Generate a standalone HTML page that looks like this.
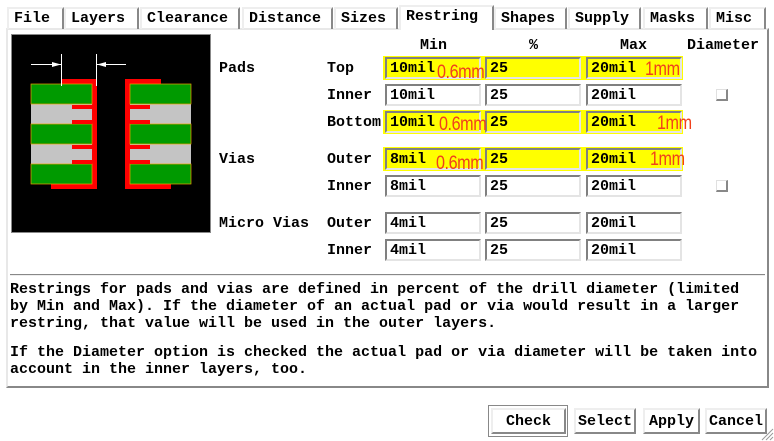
<!DOCTYPE html>
<html><head><style>
*{margin:0;padding:0;box-sizing:border-box}
body{width:774px;height:441px;background:#fff;position:relative;overflow:hidden;font-family:"Liberation Mono",monospace;font-weight:bold;font-size:15px;color:#000}
.a{position:absolute;white-space:nowrap;line-height:17px}
.tab{position:absolute;top:7px;height:22px;border-top:2px solid #eee;border-left:2px solid #eee;border-right:2px solid #888;padding-left:5px;line-height:20px}
.panel{position:absolute;left:6px;top:28px;width:763px;height:360px;border-left:2px solid #e8e8e8;border-top:2px solid #e8e8e8;border-right:2px solid #888;border-bottom:2px solid #888}
.in{position:absolute;height:22px;border-top:2px solid #808080;border-left:2px solid #808080;border-right:2px solid #e4e4e4;border-bottom:2px solid #e4e4e4;background:#fff;padding-left:3px;line-height:20px}
.y{background:#ff0}
.yb{position:absolute;background:#ff0}
.r{position:absolute;font-family:"Liberation Sans",sans-serif;font-weight:normal;color:#f0401c;font-size:19px;line-height:19px;letter-spacing:-0.5px;transform:scaleX(0.85);transform-origin:left}
.cb{position:absolute;width:12px;height:12px;border-top:1px solid #e0e0e0;border-left:1px solid #e0e0e0;border-right:2px solid #888;border-bottom:2px solid #888}
.btn{position:absolute;top:408px;height:26px;border-top:2px solid #eee;border-left:2px solid #eee;border-right:2px solid #888;border-bottom:2px solid #888;text-align:center;line-height:23px}
</style></head><body>
<div class="panel"></div>
<div class="tab" style="left:7px;width:57px">File</div>
<div class="tab" style="left:64px;width:75px">Layers</div>
<div class="tab" style="left:140px;width:100px">Clearance</div>
<div class="tab" style="left:242px;width:91px">Distance</div>
<div class="tab" style="left:334px;width:64px">Sizes</div>
<div class="tab" style="left:399px;top:5px;height:25px;width:95px;background:#fff;border-bottom:none">Restring</div>
<div class="tab" style="left:494px;width:73px">Shapes</div>
<div class="tab" style="left:568px;width:73px">Supply</div>
<div class="tab" style="left:643px;width:65px">Masks</div>
<div class="tab" style="left:709px;width:57px">Misc</div>

<svg style="position:absolute;left:11px;top:34px" width="200" height="199" viewBox="11 34 200 199">
<rect x="11" y="34" width="200" height="199" fill="#000" stroke="#888" stroke-width="2"/>
<g fill="#ff0000">
<rect x="92" y="79" width="5" height="110"/><rect x="62" y="79" width="35" height="5"/><rect x="51" y="184" width="46" height="5"/>
<rect x="125" y="79" width="5" height="110"/><rect x="125" y="79" width="36" height="5"/><rect x="125" y="184" width="46" height="5"/>
</g>
<g fill="#c4c4c4"><rect x="31" y="104" width="61" height="20"/><rect x="31" y="144" width="61" height="20"/><rect x="130" y="104" width="61" height="20"/><rect x="130" y="144" width="61" height="20"/></g>
<g fill="#009a00" stroke="#f0a000" stroke-width="0.7"><rect x="31" y="84" width="61" height="20"/><rect x="31" y="124" width="61" height="20"/><rect x="31" y="164" width="61" height="20"/><rect x="130" y="84" width="61" height="20"/><rect x="130" y="124" width="61" height="20"/><rect x="130" y="164" width="61" height="20"/></g>
<g fill="#ff0000"><rect x="72" y="105" width="20" height="4"/><rect x="72" y="120" width="20" height="4"/><rect x="72" y="145" width="20" height="4"/><rect x="72" y="160" width="20" height="4"/>
<rect x="130" y="105" width="20" height="4"/><rect x="130" y="120" width="20" height="4"/><rect x="130" y="145" width="20" height="4"/><rect x="130" y="160" width="20" height="4"/></g>
<g stroke="#fff" stroke-width="1"><line x1="61.5" y1="54" x2="61.5" y2="86"/><line x1="96.5" y1="54" x2="96.5" y2="86"/><line x1="31" y1="64.5" x2="61" y2="64.5"/><line x1="97" y1="64.5" x2="126" y2="64.5"/></g>
<g fill="#fff"><polygon points="52,62 61,64.5 52,67"/><polygon points="106,62 97,64.5 106,67"/></g>
</svg>

<div class="a" style="left:420px;top:37px">Min</div>
<div class="a" style="left:529px;top:37px">%</div>
<div class="a" style="left:620px;top:37px">Max</div>
<div class="a" style="left:687px;top:37px">Diameter</div>

<div class="a" style="left:219px;top:60px">Pads</div>
<div class="a" style="left:327px;top:60px">Top</div>
<div class="a" style="left:327px;top:87px">Inner</div>
<div class="a" style="left:327px;top:114px">Bottom</div>
<div class="a" style="left:219px;top:151px">Vias</div>
<div class="a" style="left:327px;top:151px">Outer</div>
<div class="a" style="left:327px;top:178px">Inner</div>
<div class="a" style="left:219px;top:215px">Micro Vias</div>
<div class="a" style="left:327px;top:215px">Outer</div>
<div class="a" style="left:327px;top:242px">Inner</div>

<div class="yb" style="left:383px;top:56px;width:300px;height:24px"></div>
<div class="yb" style="left:383px;top:110px;width:300px;height:24px"></div>
<div class="yb" style="left:383px;top:147px;width:300px;height:24px"></div>

<div class="in y" style="left:385px;top:57px;width:96px">10mil</div><div class="in y" style="left:485px;top:57px;width:96px">25</div><div class="in y" style="left:586px;top:57px;width:96px">20mil</div>
<div class="in" style="left:385px;top:84px;width:96px">10mil</div><div class="in" style="left:485px;top:84px;width:96px">25</div><div class="in" style="left:586px;top:84px;width:96px">20mil</div>
<div class="in y" style="left:385px;top:111px;width:96px">10mil</div><div class="in y" style="left:485px;top:111px;width:96px">25</div><div class="in y" style="left:586px;top:111px;width:96px">20mil</div>
<div class="in y" style="left:385px;top:148px;width:96px">8mil</div><div class="in y" style="left:485px;top:148px;width:96px">25</div><div class="in y" style="left:586px;top:148px;width:96px">20mil</div>
<div class="in" style="left:385px;top:175px;width:96px">8mil</div><div class="in" style="left:485px;top:175px;width:96px">25</div><div class="in" style="left:586px;top:175px;width:96px">20mil</div>
<div class="in" style="left:385px;top:212px;width:96px">4mil</div><div class="in" style="left:485px;top:212px;width:96px">25</div><div class="in" style="left:586px;top:212px;width:96px">20mil</div>
<div class="in" style="left:385px;top:239px;width:96px">4mil</div><div class="in" style="left:485px;top:239px;width:96px">25</div><div class="in" style="left:586px;top:239px;width:96px">20mil</div>

<div class="r" style="left:437px;top:63px">0.6mm</div>
<div class="r" style="left:645px;top:60px">1mm</div>
<div class="r" style="left:439px;top:115px">0.6mm</div>
<div class="r" style="left:657px;top:114px">1mm</div>
<div class="r" style="left:436px;top:154px">0.6mm</div>
<div class="r" style="left:650px;top:150px">1mm</div>

<div class="cb" style="left:716px;top:89px"></div>
<div class="cb" style="left:716px;top:180px"></div>

<div style="position:absolute;left:10px;top:274px;width:755px;height:2px;background:#888;border-bottom:1px solid #eee"></div>
<div class="a" style="left:10px;top:281px">Restrings for pads and vias are defined in percent of the drill diameter (limited<br>by Min and Max). If the diameter of an actual pad or via would result in a larger<br>restring, that value will be used in the outer layers.</div>
<div class="a" style="left:10px;top:344px">If the Diameter option is checked the actual pad or via diameter will be taken into<br>account in the inner layers, too.</div>

<div style="position:absolute;left:488px;top:405px;width:80px;height:32px;border:1px solid #888"></div>
<div class="btn" style="left:491px;width:75px">Check</div>
<div class="btn" style="left:574px;width:62px">Select</div>
<div class="btn" style="left:643px;width:57px">Apply</div>
<div class="btn" style="left:705px;width:62px">Cancel</div>
<svg style="position:absolute;left:760px;top:427px" width="14" height="14"><g stroke="#999"><line x1="2" y1="13" x2="13" y2="2"/><line x1="6" y1="13" x2="13" y2="6"/><line x1="10" y1="13" x2="13" y2="10"/></g></svg>
</body></html>
